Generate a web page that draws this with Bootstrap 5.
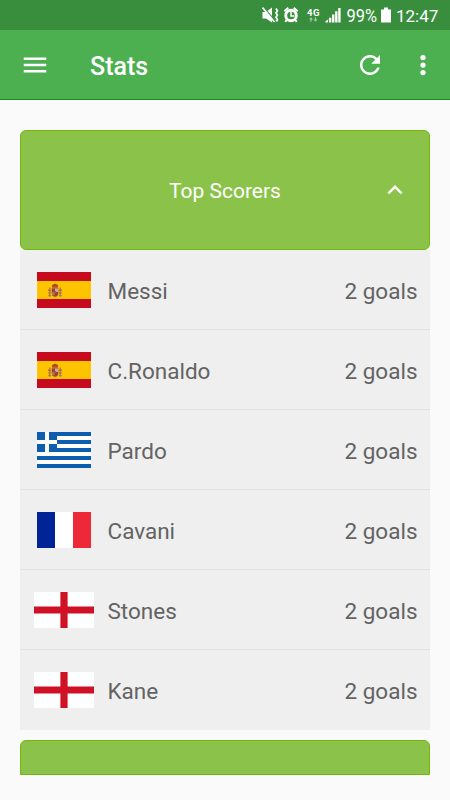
<!DOCTYPE html>
<html lang="en">
<head>
<meta charset="utf-8">
<meta name="viewport" content="width=device-width, initial-scale=1">
<title>Stats</title>
<link href="https://cdn.jsdelivr.net/npm/bootstrap@5.3.0/dist/css/bootstrap.min.css" rel="stylesheet">
<style>
body{background:#fafafa;font-family:Roboto,"Liberation Sans",sans-serif;height:800px;overflow:hidden}
svg{display:block;flex:none}
.status-bar{height:30px;background:#388e3c;padding:0 12px 0 0;font-size:17.5px;line-height:30px}
.clock{width:42px;font-size:17px;padding-top:2px;white-space:nowrap}
.app-bar{height:70px;background:#4caf50;border-bottom:1px solid #149414;padding:0 12.5px 0 20px}
.app-title{font-size:25px;font-weight:500;line-height:30px;margin-left:40px;padding-top:4px}
.refresh{margin-right:22.5px}
.stats-list{width:410px;padding-top:30px}
.panel-head{height:120px;background:#8bc34a;border:1px solid #74b70a;border-radius:6px;padding:0 19px;color:#fff}
.panel-head .head-label{font-size:21px;padding:3px 0 0 30px}
.next-head{height:35px;margin-top:10px;border-radius:6px 6px 0 0}
.score-row{height:80px;background:#efefef;border:0;border-bottom:1px solid #e2e2e2;border-radius:0!important;padding:0 12.5px 0 13.5px;font-size:22.5px;color:#636363}
.score-row:last-child{border-bottom-color:#efefef}
.flag-slot{width:60.5px;margin-right:13.5px}
.row-text{padding-top:4px}
</style>
<script src="https://cdn.jsdelivr.net/npm/bootstrap@5.3.0/dist/js/bootstrap.bundle.min.js"></script>
</head>
<body>
<svg width="0" height="0" class="position-absolute">
  <defs>
    <symbol id="flag-es" viewBox="0 0 54 36">
      <path fill="#c60b1e" d="M0 0h54v36H0z"/><path fill="#ffc400" d="M0 9h54v18H0z"/>
      <g transform="translate(11 11.5)">
        <path fill="#a98345" d="M1 4h1.500v8H1zM11.500 4H13v8h-1.500z"/>
        <path fill="#b5704a" d="M0 6h3v1.400H0zM11 6h3v1.400h-3zM0 9h3v1H0zM11 9h3v1h-3z"/>
        <path fill="#8c8a72" d="M.2 11.600h3v1.400h-3zM10.800 11.600h3v1.400h-3z"/>
        <path fill="#b5462b" d="M3.700 2.200 5 .9 7 0l2 .9 1.300 1.300-.7 2H4.400z"/>
        <path fill="#a93c2c" d="M3.700 4.800h6.600v5c0 2-1.300 3.400-3.300 3.400s-3.300-1.400-3.300-3.400z"/>
        <path fill="#c9a7a0" d="M7 5h3v3.500H7z"/><path fill="#b98225" d="M4 8.700h2.600v3H4z"/>
        <circle cx="7" cy="8.600" r="1.100" fill="#526c9d"/>
      </g>
    </symbol>
    <symbol id="flag-gr" viewBox="0 0 54 36">
      <path fill="#fff" d="M0 0h54v36H0z"/>
      <path fill="#0d5eaf" d="M0 0h54v4H0zM0 8h54v4H0zM0 16h54v4H0zM0 24h54v4H0zM0 32h54v4H0zM0 0h20v20H0z"/>
      <path fill="#fff" d="M8 0h4v20H8zM0 8h20v4H0z"/>
    </symbol>
    <symbol id="flag-fr" viewBox="0 0 54 36">
      <path fill="#002395" d="M0 0h18v36H0z"/><path fill="#fff" d="M18 0h18v36H18z"/><path fill="#ed2939" d="M36 0h18v36H36z"/>
    </symbol>
    <symbol id="flag-en" viewBox="0 0 60.5 36">
      <path fill="#fff" d="M0 0h60.500v36H0z"/><path fill="#ce1124" d="M26.400 0h7.200v36h-7.200zM0 14.400h60.500v7.200H0z"/>
    </symbol>
  </defs>
</svg>

<div class="status-bar d-flex justify-content-end align-items-center text-white">
  <svg width="130" height="30" viewBox="262 0 130 30" fill="#fff" style="margin-right:4px">
    <path d="M262.500 12h3.500l6-4.500v15L266 18.500h-3.500z"/>
    <path d="M263.500 7l12 14.500" stroke="#388e3c" stroke-width="1.300"/>
    <path d="M262.500 7.500l12 14.500" stroke="#fff" stroke-width="1.700"/>
    <path d="M276 8.500l1.400 2.200-1.400 2.200 1.400 2.200-1.400 2.200 1.400 2.200-1 2" fill="none" stroke="#fff" stroke-width="1.800"/>
    <circle cx="291" cy="15.500" r="5.300" fill="none" stroke="#fff" stroke-width="2.900"/>
    <path d="M291 12v4h3.200" fill="none" stroke="#fff" stroke-width="1.500"/>
    <path d="M284.300 11.200l4-3.400M297.700 11.200l-4-3.400M286.500 20l-1.200 2M295.500 20l1.200 2" stroke="#fff" stroke-width="1.900"/>
    <text x="307" y="16" font-size="9.500" font-weight="700" textLength="12.500">4G</text>
    <path d="M311 17.300l-2 2.200h1.400v2.300h1.200v-2.300h1.400zM315.500 21.800l-2-2.200h1.400v-2.300h1.200v2.300h1.400z" opacity=".55"/>
    <path d="M325.500 22.500v-1.300l2.500-1.700v3zM328.900 17.800h2.400v4.700h-2.400zM332 14.500h2.400v8H332zM335.100 11.300h2.400v11.200h-2.400zM338.200 8h2.400v14.500h-2.400z"/>
    <text x="346.500" y="22" font-size="17.500" textLength="30.500" lengthAdjust="spacingAndGlyphs">99%</text>
    <path d="M384 7.500h4v2h3v13h-10v-13h3z"/>
  </svg>
  <span class="clock">12:47</span>
</div>

<nav class="app-bar d-flex align-items-center text-white">
  <svg width="30" height="30" viewBox="0 0 24 24" fill="#fff"><path d="M3 18h18v-2H3v2zm0-5h18v-2H3v2zm0-7v2h18V6H3z"/></svg>
  <div class="app-title me-auto">Stats</div>
  <svg class="refresh" width="30" height="30" viewBox="0 0 24 24" fill="#fff"><path d="M17.650 6.350C16.200 4.900 14.210 4 12 4c-4.420 0-7.990 3.580-7.990 8s3.570 8 7.990 8c3.730 0 6.840-2.550 7.730-6h-2.080c-.82 2.330-3.040 4-5.650 4-3.310 0-6-2.690-6-6s2.690-6 6-6c1.660 0 3.140.69 4.220 1.780L13 11h7V4l-2.350 2.350z"/></svg>
  <svg width="30" height="30" viewBox="0 0 24 24" fill="#fff"><circle cx="12" cy="6" r="2.100"/><circle cx="12" cy="12" r="2.100"/><circle cx="12" cy="18" r="2.100"/></svg>
</nav>

<main class="stats-list mx-auto">
  <div class="panel-head d-flex align-items-center">
    <div class="head-label flex-grow-1 text-center">Top Scorers</div>
    <svg width="30" height="30" viewBox="0 0 24 24" fill="#fff"><path d="M12 8l-6 6 1.410 1.410L12 10.830l4.590 4.580L18 14z"/></svg>
  </div>
  <div class="list-group list-group-flush">
    <div class="score-row list-group-item d-flex align-items-center"><div class="flag-slot d-flex justify-content-center"><svg width="54" height="36"><use href="#flag-es"/></svg></div><span class="row-text">Messi</span><span class="row-text ms-auto">2 goals</span></div>
    <div class="score-row list-group-item d-flex align-items-center"><div class="flag-slot d-flex justify-content-center"><svg width="54" height="36"><use href="#flag-es"/></svg></div><span class="row-text">C.Ronaldo</span><span class="row-text ms-auto">2 goals</span></div>
    <div class="score-row list-group-item d-flex align-items-center"><div class="flag-slot d-flex justify-content-center"><svg width="54" height="36"><use href="#flag-gr"/></svg></div><span class="row-text">Pardo</span><span class="row-text ms-auto">2 goals</span></div>
    <div class="score-row list-group-item d-flex align-items-center"><div class="flag-slot d-flex justify-content-center"><svg width="54" height="36"><use href="#flag-fr"/></svg></div><span class="row-text">Cavani</span><span class="row-text ms-auto">2 goals</span></div>
    <div class="score-row list-group-item d-flex align-items-center"><div class="flag-slot"><svg width="60.500" height="36"><use href="#flag-en"/></svg></div><span class="row-text">Stones</span><span class="row-text ms-auto">2 goals</span></div>
    <div class="score-row list-group-item d-flex align-items-center"><div class="flag-slot"><svg width="60.500" height="36"><use href="#flag-en"/></svg></div><span class="row-text">Kane</span><span class="row-text ms-auto">2 goals</span></div>
  </div>
  <div class="panel-head next-head"></div>
</main>
</body>
</html>
